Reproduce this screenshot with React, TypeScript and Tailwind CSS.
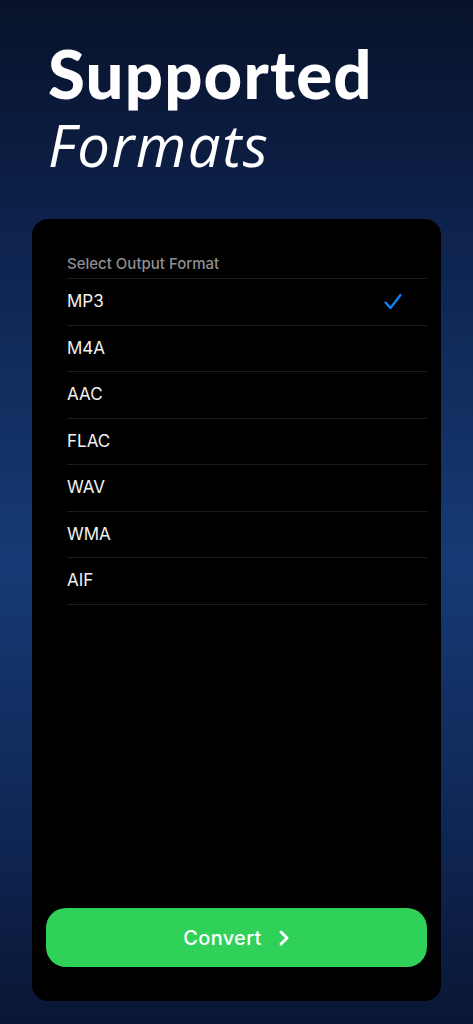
import React from "react";
import { ChevronRight } from "lucide-react";

const formats = ["MP3", "M4A", "AAC", "FLAC", "WAV", "WMA", "AIF"];

function Check() {
  return (
    <svg width="18" height="18" viewBox="0 0 18 18" fill="none">
      <path
        d="M1.5 9.5 L6.5 15 L16.5 2"
        stroke="#0a84ff"
        strokeWidth="2.2"
        strokeLinecap="round"
        strokeLinejoin="round"
      />
    </svg>
  );
}

export default function App() {
  return (
    <div className="flex flex-col w-[473px] h-[1024px] overflow-hidden bg-[linear-gradient(180deg,#08122a_0%,#0e2450_25%,#163a74_55%,#0f2756_80%,#0a1634_100%)]">
      <div className="flex flex-col pl-[48px] pt-[35px] h-[219px] text-white">
        <span className="font-['Lato',sans-serif] font-black text-[67px] leading-[76px] tracking-[1.2px]">
          Supported
        </span>
        <span className="font-['Open_Sans',sans-serif] italic font-normal text-[58px] leading-[64px] tracking-[1.5px] mt-[2px]">
          Formats
        </span>
      </div>

      <div className="flex flex-col mx-[32px] w-[409px] h-[782px] rounded-[16px] bg-black font-['Inter',sans-serif]">
        <div className="flex flex-col pl-[35px] pr-[14px] pt-[36px]">
          <div className="flex items-end h-[22px] pb-[2px] text-[15px] font-medium text-[#8e8e93]">
            Select Output Format
          </div>
          <div className="flex flex-col border-t border-[#1c1c1e] mt-[1px]">
            {formats.map((f, i) => (
              <div
                key={f}
                className="flex items-center justify-between h-[46.5px] border-b border-[#1c1c1e] pr-[25px]"
              >
                <span className="text-[17px] text-[#f2f2f2]">{f}</span>
                {i === 0 && <Check />}
              </div>
            ))}
          </div>
        </div>

        <div className="flex-1" />

        <div className="flex px-[14px] pb-[34px]">
          <button className="flex items-center justify-center gap-[10px] w-[382px] h-[59px] rounded-[20px] bg-[#30d158] text-white text-[20px] font-medium tracking-[0.3px] pl-[6px]">
            Convert
            <ChevronRight size={24} strokeWidth={3} />
          </button>
        </div>
      </div>
    </div>
  );
}
